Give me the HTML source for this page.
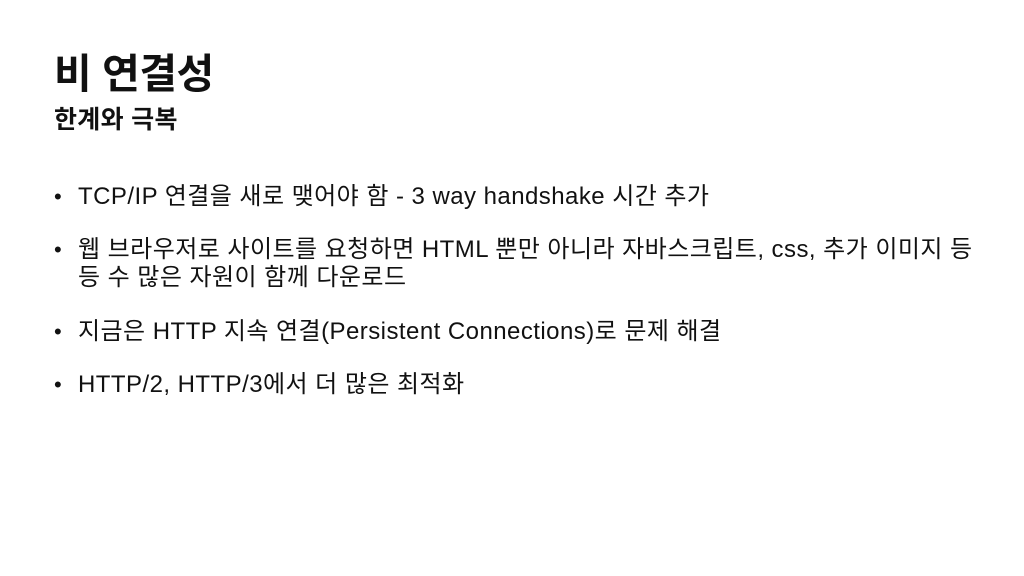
<!DOCTYPE html>
<html><head><meta charset="utf-8"><style>
body{margin:0;width:1024px;height:576px;background:#fff;font-family:"Liberation Sans","Noto Sans CJK KR",sans-serif;color:#111;position:relative;overflow:hidden}
.t{position:absolute;left:54px;top:46px;font-size:41px;font-weight:bold;line-height:56px;letter-spacing:-0.5px}
.s{position:absolute;left:54px;top:104px;font-size:25px;font-weight:bold;line-height:32px;letter-spacing:0.3px}
.b{position:absolute;left:78px;font-size:24px;line-height:28px;white-space:nowrap;letter-spacing:0.45px}
.b:before{content:"•";position:absolute;left:-24px;font-size:22px}
</style></head><body>
<div class="t">비 연결성</div>
<div class="s">한계와 극복</div>
<div class="b" style="top:183px">TCP/IP 연결을 새로 맺어야 함 - 3 way handshake 시간 추가</div>
<div class="b" style="top:236px">웹 브라우저로 사이트를 요청하면 HTML 뿐만 아니라 자바스크립트, css, 추가 이미지 등<br>등 수 많은 자원이 함께 다운로드</div>
<div class="b" style="top:318px">지금은 HTTP 지속 연결(Persistent Connections)로 문제 해결</div>
<div class="b" style="top:371px">HTTP/2, HTTP/3에서 더 많은 최적화</div>
</body></html>
